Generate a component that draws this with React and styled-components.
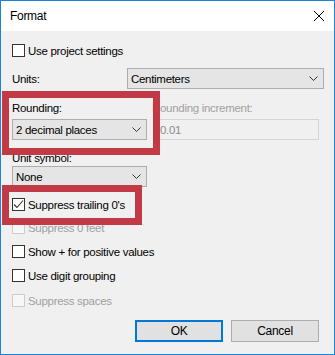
import React from 'react'
import styled, { createGlobalStyle } from 'styled-components'

const GlobalStyle = createGlobalStyle`
  body {
    margin: 0;
    background: #ffffff;
    font-family: "Liberation Sans", Arial, sans-serif;
    font-size: 11.5px;
    letter-spacing: -0.3px;
    color: #000000;
  }
`

const Window = styled.div`
  position: relative;
  width: 335px;
  height: 355px;
  box-sizing: border-box;
  border: 1px solid #1883d7;
  background: #f0f0f0;
  display: flex;
  flex-direction: column;
`

const TitleBar = styled.div`
  height: 30px;
  background: #ffffff;
  display: flex;
  align-items: center;
  justify-content: space-between;
  padding: 0 10px 0 9px;
  font-size: 12px;
`

const Body = styled.div`
  display: flex;
  flex-direction: column;
  padding: 13px 9px 0 11px;
`

const CheckRow = styled.div`
  display: flex;
  align-items: center;
  gap: 3px;
  height: 13px;
  margin-top: ${(p) => p.$mt || 0}px;
  color: ${(p) => (p.$disabled ? '#a0a0a0' : '#000000')};
  white-space: nowrap;
`

const Box = styled.div`
  width: 13px;
  height: 13px;
  box-sizing: border-box;
  border: 1px solid ${(p) => (p.$disabled ? '#cccccc' : '#333333')};
  background: ${(p) => (p.$disabled ? '#f7f7f7' : '#ffffff')};
  display: flex;
  align-items: center;
  justify-content: center;
`

const UnitsRow = styled.div`
  display: flex;
  align-items: center;
  margin-top: 11px;
`

const Label = styled.div`
  line-height: 16px;
  height: 16px;
  white-space: nowrap;
  color: ${(p) => (p.$disabled ? '#a0a0a0' : '#000000')};
  width: ${(p) => (p.$w ? `${p.$w}px` : 'auto')};
  margin-top: ${(p) => p.$mt || 0}px;
  margin-left: ${(p) => p.$ml || 0}px;
`

const Grid = styled.div`
  display: grid;
  grid-template-columns: 135px 164px;
  column-gap: 8px;
  row-gap: 3px;
  margin-top: 11px;
`

const SelectBox = styled.div`
  display: flex;
  align-items: center;
  justify-content: space-between;
  box-sizing: border-box;
  width: ${(p) => p.$w}px;
  height: 21px;
  border: 1px solid #adadad;
  background: #e5e5e5;
  padding: 0 5px 0 3px;
  white-space: nowrap;
`

const Input = styled.div`
  display: flex;
  align-items: center;
  box-sizing: border-box;
  height: 21px;
  border: 1px solid #d4d4d4;
  background: #f0f0f0;
  padding: 0 4px;
  color: #8c8c8c;
`

const ButtonRow = styled.div`
  display: flex;
  justify-content: flex-end;
  gap: 8px;
  margin-top: 13px;
  padding-right: 6px;
`

const Button = styled.div`
  width: 88px;
  height: 22px;
  box-sizing: border-box;
  display: flex;
  align-items: center;
  justify-content: center;
  background: #e1e1e1;
  border: ${(p) => (p.$primary ? '2px solid #0078d7' : '1px solid #adadad')};
  font-size: 12px;
`

// red annotation frames drawn over the dialog
const Highlight = styled.div`
  position: absolute;
  box-sizing: border-box;
  border: 7px solid #c33a47;
  left: ${(p) => p.$x}px;
  top: ${(p) => p.$y}px;
  width: ${(p) => p.$w}px;
  height: ${(p) => p.$h}px;
`

const Chevron = () => (
  <svg width="9" height="5" viewBox="0 0 9 5">
    <polyline points="0.5,0.5 4.5,4.5 8.5,0.5" fill="none" stroke="#333" strokeWidth="1" />
  </svg>
)

const Check = ({ checked, disabled, label, mt }) => (
  <CheckRow $mt={mt} $disabled={disabled}>
    <Box $disabled={disabled}>
      {checked && (
        <svg width="11" height="11" viewBox="0 0 11 11">
          <polyline points="1,5.5 4,8.5 10,1.5" fill="none" stroke="#333" strokeWidth="1.1" />
        </svg>
      )}
    </Box>
    {label}
  </CheckRow>
)

const Select = ({ value, w }) => (
  <SelectBox $w={w}>
    {value}
    <Chevron />
  </SelectBox>
)

const App = () => {
  return (
    <>
      <GlobalStyle />
      <Window>
        <TitleBar>
          Format
          <svg width="10" height="10" viewBox="0 0 10 10">
            <path d="M0 0 L10 10 M10 0 L0 10" stroke="#000" strokeWidth="1" />
          </svg>
        </TitleBar>
        <Body>
          <Check label="Use project settings" />
          <UnitsRow>
            <Label $w={115}>Units:</Label>
            <Select value="Centimeters" w={197} />
          </UnitsRow>
          <Grid>
            <Label>Rounding:</Label>
            <Label $disabled $ml={-3}>Rounding increment:</Label>
            <Select value="2 decimal places" w={135} />
            <Input>0.01</Input>
          </Grid>
          <Label $mt={10}>Unit symbol:</Label>
          <Select value="None" w={135} />
          <Check checked label="Suppress trailing 0's" mt={11} />
          <Check disabled label="Suppress 0 feet" mt={10} />
          <Check label="Show + for positive values" mt={11} />
          <Check label="Use digit grouping" mt={11} />
          <Check disabled label="Suppress spaces" mt={12} />
          <ButtonRow>
            <Button $primary>OK</Button>
            <Button>Cancel</Button>
          </ButtonRow>
        </Body>
        <Highlight $x={1} $y={90} $w={158} $h={64} />
        <Highlight $x={1} $y={184} $w={140} $h={40} />
      </Window>
    </>
  )
}

export default App
